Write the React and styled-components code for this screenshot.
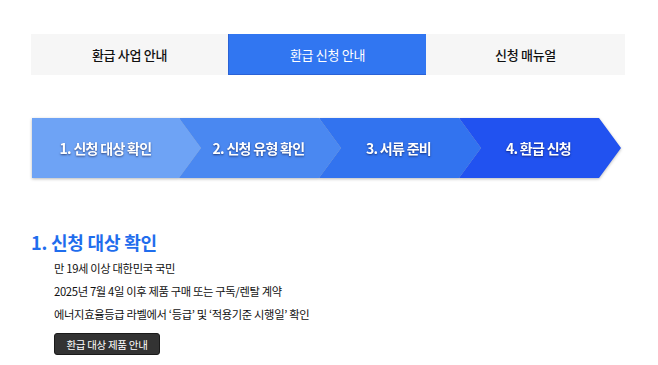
import React from "react";
import styled, { createGlobalStyle } from "styled-components";

const Global = createGlobalStyle`
  html, body { margin: 0; padding: 0; background: #fff; }
  body { font-family: "Noto Sans CJK KR", "Noto Sans", sans-serif; color: #111; }
  * { box-sizing: border-box; }
`;

const Page = styled.div`
  padding: 34px 33px 0 31px;
`;

const Tabs = styled.div`
  display: grid;
  grid-template-columns: 197px 198px 199px;
  height: 41px;
`;

const Tab = styled.div`
  display: flex;
  align-items: center;
  justify-content: center;
  font-size: 13px;
  font-weight: ${(p) => (p.$active ? 400 : 500)};
  letter-spacing: -0.3px;
  background: ${(p) => (p.$active ? "#3176f1" : "#f6f6f6")};
  color: ${(p) => (p.$active ? "#fff" : "#111")};
  border-left: ${(p) => (p.$active ? "1px solid #2a62d6" : "none")};
  border-bottom: ${(p) => (p.$active ? "1px solid #2a62d6" : "none")};
`;

const Steps = styled.div`
  display: flex;
  margin: 43px 0 0 1px;
  height: 60px;
  filter: drop-shadow(0 1px 1.5px rgba(0, 0, 0, 0.28));
`;

const Step = styled.div`
  display: flex;
  align-items: center;
  justify-content: center;
  width: ${(p) => (p.$first ? 169 : 162)}px;
  margin-left: ${(p) => (p.$first ? 0 : -22)}px;
  padding-right: ${(p) => (p.$first ? 22 : 3)}px;
  background: ${(p) => p.$bg};
  clip-path: ${(p) =>
    p.$first
      ? "polygon(0 0, calc(100% - 22px) 0, 100% 50%, calc(100% - 22px) 100%, 0 100%)"
      : "polygon(0 0, calc(100% - 22px) 0, 100% 50%, calc(100% - 22px) 100%, 0 100%, 22px 50%)"};
  color: #fff;
  font-size: 14px;
  font-weight: 700;
  letter-spacing: -0.7px;
  text-shadow: 0 1px 2px rgba(0, 0, 40, 0.55);
`;

const Section = styled.section`
  margin-top: 52px;
`;

const Heading = styled.h2`
  margin: 0;
  font-size: 18px;
  line-height: 25px;
  font-weight: 700;
  color: #1f6ded;
  letter-spacing: -0.2px;
`;

const List = styled.ul`
  list-style: none;
  margin: 2px 0 0;
  padding: 0 0 0 23px;
`;

const Item = styled.li`
  font-size: 11.3px;
  line-height: 23px;
  color: #111;
  letter-spacing: -0.35px;
`;

const Button = styled.button`
  margin: 7px 0 0 23px;
  width: 106px;
  height: 22px;
  padding: 0;
  border: 1px solid #1a1a1a;
  border-radius: 3px;
  background: #333;
  color: #fff;
  font-family: inherit;
  font-size: 10.5px;
  letter-spacing: -0.3px;
  display: flex;
  align-items: center;
  justify-content: center;
`;

const tabs = ["환급 사업 안내", "환급 신청 안내", "신청 매뉴얼"];
const steps = [
  { label: "1. 신청 대상 확인", bg: "#6ea3f5" },
  { label: "2. 신청 유형 확인", bg: "#4a88f1" },
  { label: "3. 서류 준비", bg: "#3273ef" },
  { label: "4. 환급 신청", bg: "#2152f0" },
];
const items = [
  "만 19세 이상 대한민국 국민",
  "2025년 7월 4일 이후 제품 구매 또는 구독/렌탈 계약",
  "에너지효율등급 라벨에서 ‘등급’ 및 ‘적용기준 시행일’ 확인",
];

export default function App() {
  return (
    <>
      <Global />
      <Page>
        <Tabs>
          {tabs.map((t, i) => (
            <Tab key={t} $active={i === 1}>
              {t}
            </Tab>
          ))}
        </Tabs>
        <Steps>
          {steps.map((s, i) => (
            <Step key={s.label} $first={i === 0} $bg={s.bg}>
              {s.label}
            </Step>
          ))}
        </Steps>
        <Section>
          <Heading>1. 신청 대상 확인</Heading>
          <List>
            {items.map((t) => (
              <Item key={t}>{t}</Item>
            ))}
          </List>
          <Button>환급 대상 제품 안내</Button>
        </Section>
      </Page>
    </>
  );
}
